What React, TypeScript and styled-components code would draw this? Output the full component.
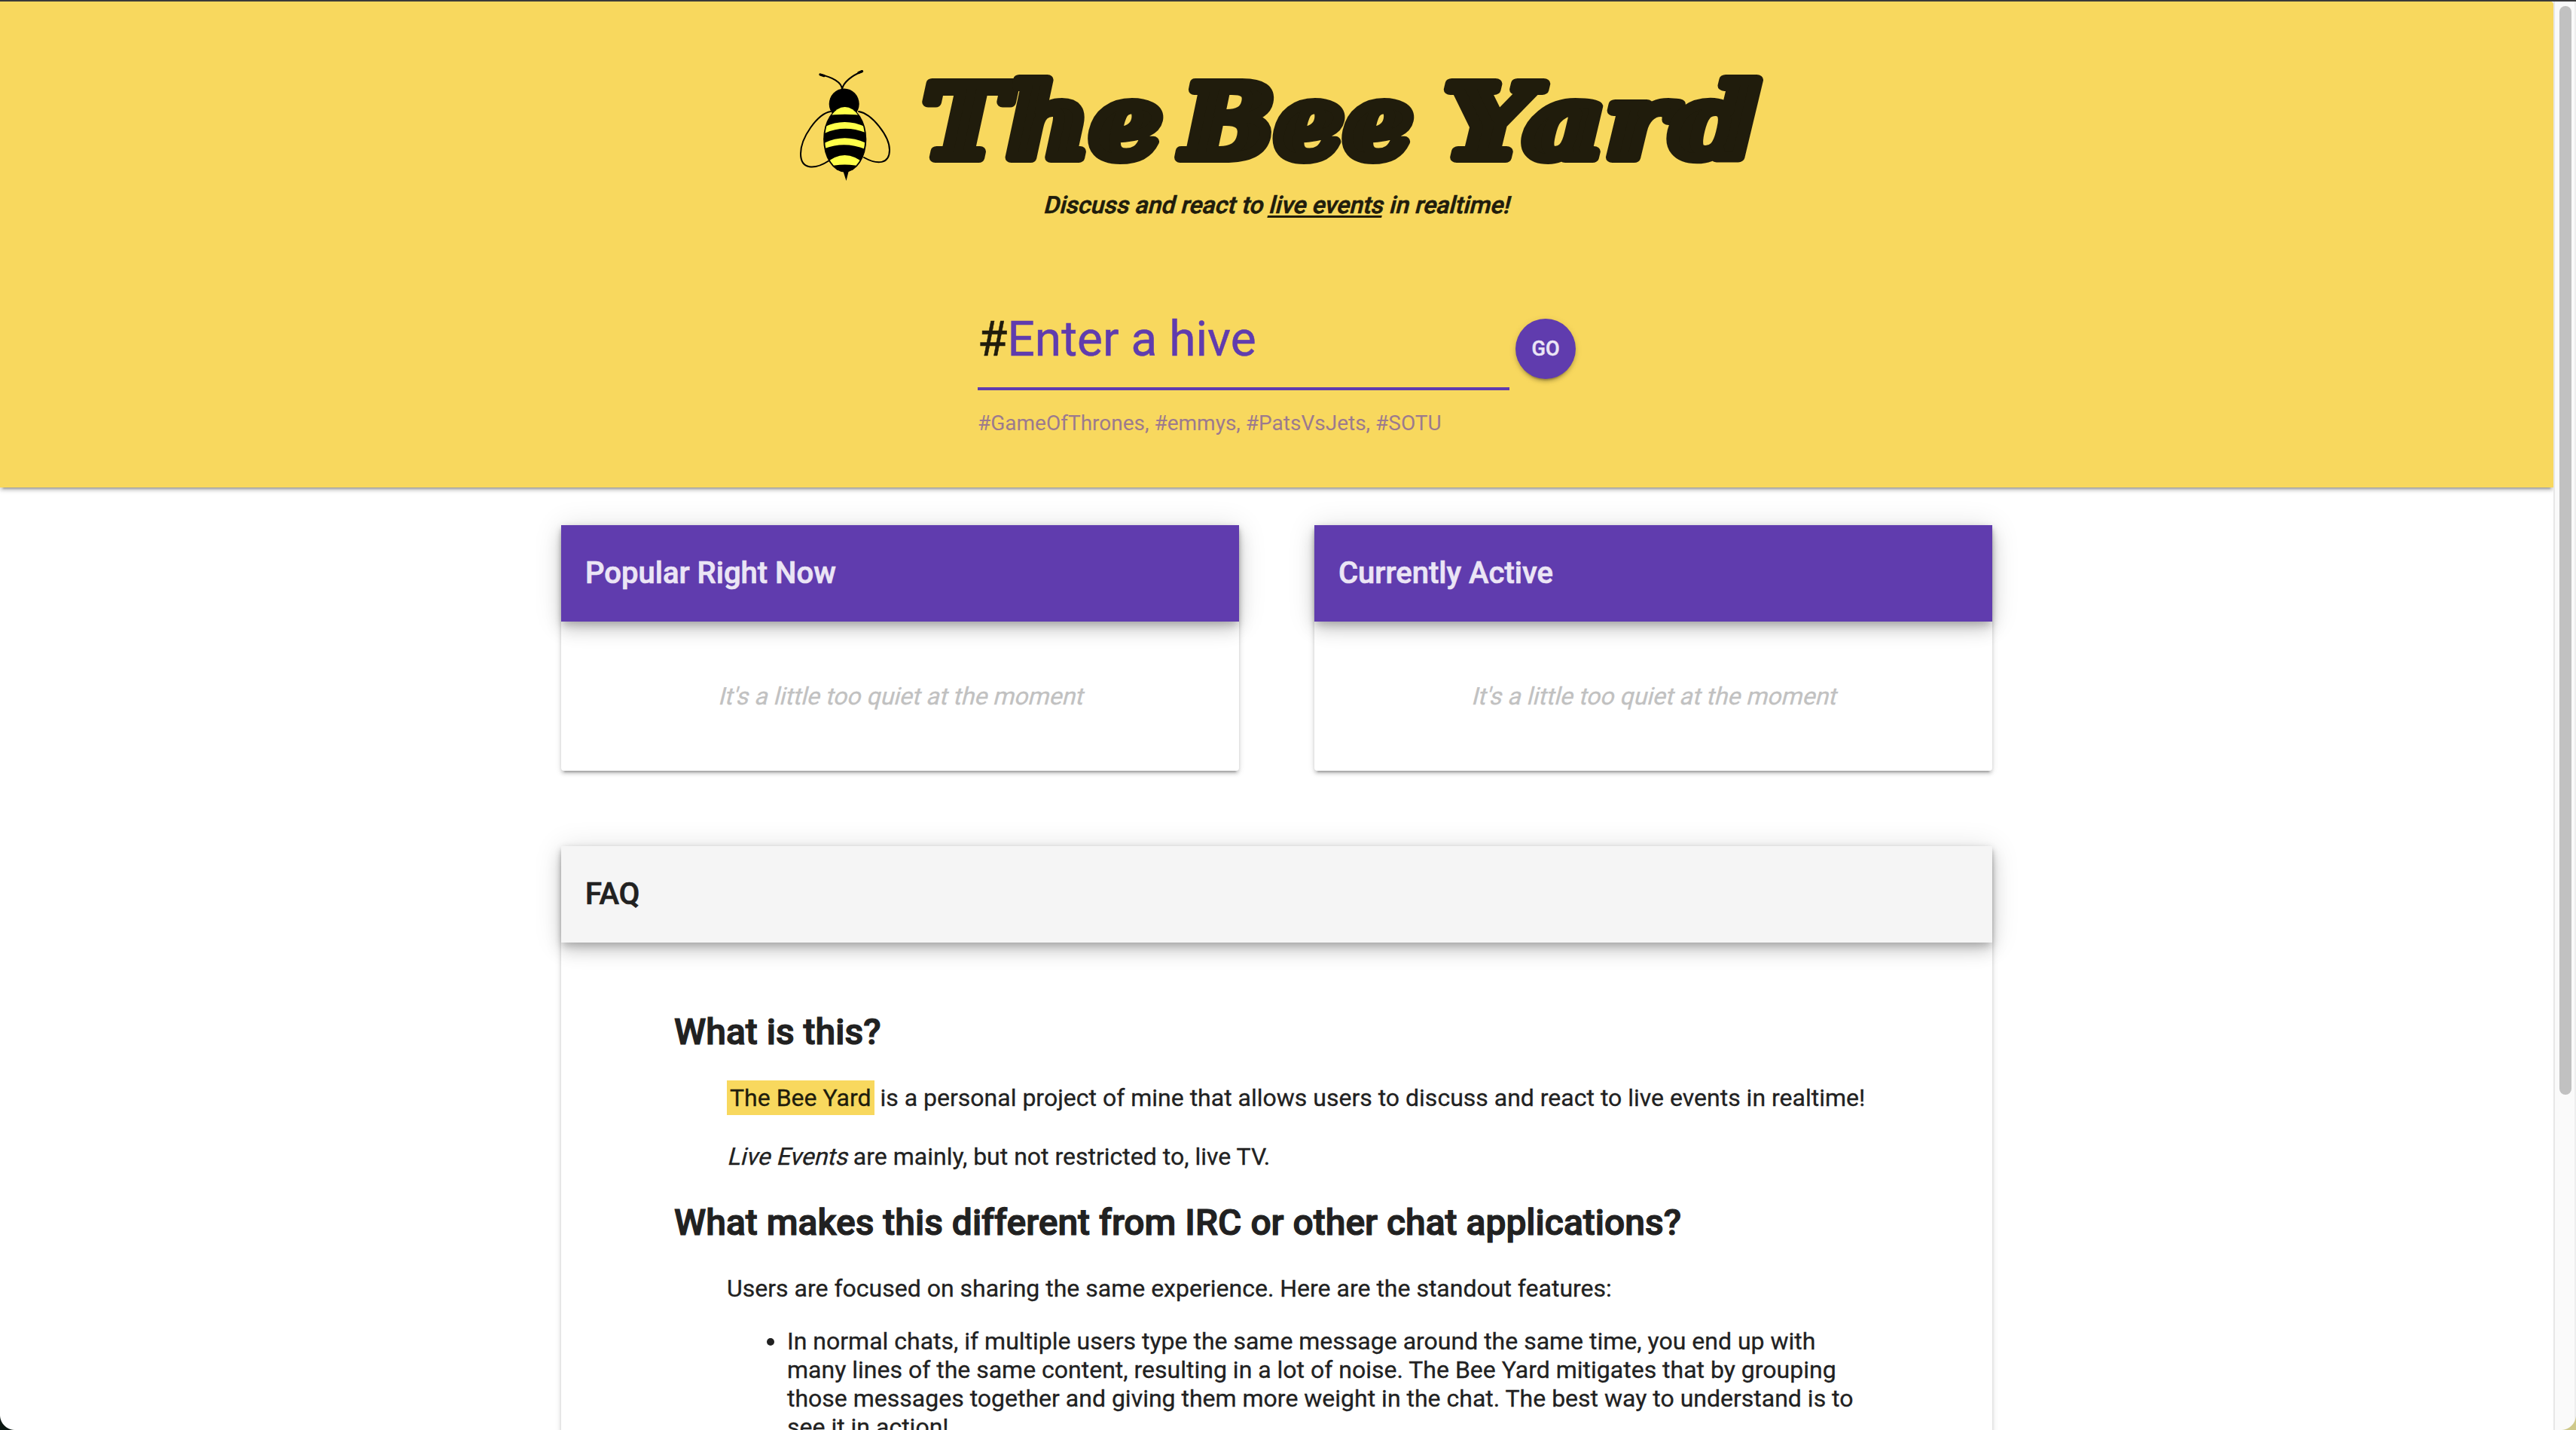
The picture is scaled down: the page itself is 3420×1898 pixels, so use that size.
import React from 'react';
import styled, { createGlobalStyle } from 'styled-components';

const purple = '#603cae';
const yellow = '#f8d85e';
const ink = '#201c0c';

const lowShadow = '0 6px 2px -4px rgba(0,0,0,.2), 0 4px 4px rgba(0,0,0,.14), 0 2px 10px rgba(0,0,0,.12)';
const highShadow = '0 6px 10px -2px rgba(0,0,0,.2), 0 12px 20px rgba(0,0,0,.14), 0 2px 36px rgba(0,0,0,.12)';

const GlobalStyle = createGlobalStyle`
  * { box-sizing: border-box; }
  body { margin: 0; background: #fff; font-family: Roboto, "Liberation Sans", sans-serif; color: #212121; overflow: hidden; }
`;

const Window = styled.div`
  position: relative;
  height: 1898px;
  overflow: hidden;
  border-top: 2px solid #3a3a3a;
  display: grid;
  grid-template-columns: 3390px 30px;
`;

const Page = styled.main`
  height: 1896px;
  overflow: hidden;
`;

const Track = styled.aside`
  background: #fafafa;
  border-left: 2px solid #e7e7e7;
  border-right: 2px solid #eee;
  padding: 6px 4px 0 6px;
`;

const Thumb = styled.div`
  height: 1445px;
  width: 16px;
  border-radius: 8px;
  background: #c1c1c1;
`;

const Corner = styled.div<{ $side: 'left' | 'right' }>`
  position: absolute;
  bottom: 0;
  ${(p) => p.$side}: 0;
  width: 20px;
  height: 20px;
  background: radial-gradient(
    circle at ${(p) => (p.$side === 'left' ? '100%' : '0%')} 0%,
    transparent 19.5px,
    ${(p) => (p.$side === 'left' ? '#0c1712' : '#cfc98a')} 20.5px
  );
`;

const Header = styled.header`
  height: 645px;
  background: ${yellow};
  border-top-right-radius: 4px;
  box-shadow: ${lowShadow};
  display: flex;
  flex-direction: column;
  align-items: center;
  color: ${ink};
`;

const Brand = styled.h1`
  margin: 0;
  width: 1290px;
  height: 245px;
  padding-top: 78px;
  display: flex;
  align-items: flex-start;
`;

const Bee = styled.svg`
  width: 150px;
  height: 170px;
  flex: none;
`;

const Wordmark = styled.svg`
  width: 1140px;
  height: 170px;
  flex: none;
  overflow: visible;
  text {
    font: italic bold 134px "DejaVu Serif", serif;
    fill: ${ink};
    stroke: ${ink};
    stroke-width: 14px;
    stroke-linejoin: round;
  }
`;

const Slanted = styled.span`
  display: inline-block;
  transform: skewX(-14deg);
  transform-origin: 50% 78%;
`;

const Tagline = styled.p`
  margin: 0;
  padding-right: 3px;
  font: 500 32px/50px Roboto, sans-serif;
  -webkit-text-stroke: 0.7px ${ink};
  u { text-decoration-thickness: 3px; text-underline-offset: 3px; }
`;

const HiveForm = styled.div`
  margin-top: 105px;
  width: 794px;
  display: grid;
  grid-template-columns: 706px 80px;
  column-gap: 8px;
`;

const Field = styled.div`
  height: 116px;
  border-bottom: 4px solid ${purple};
  font-size: 64px;
  line-height: 97px;
  color: ${purple};
  -webkit-text-stroke: 0.5px;
  span { color: ${ink}; }
`;

const GoButton = styled.button`
  margin-top: 21px;
  width: 80px;
  height: 80px;
  padding: 0;
  border: 0;
  border-radius: 50%;
  background: ${purple};
  color: #ebe5f5;
  font: 500 27px/80px Roboto, sans-serif;
  -webkit-text-stroke: 0.5px;
  box-shadow: ${lowShadow};
`;

const Helper = styled.div`
  margin-top: 26px;
  font-size: 28px;
  line-height: 36px;
  color: ${purple};
  opacity: .6;
`;

const Content = styled.div`
  width: 1900px;
  margin: 50px auto 0;
  display: grid;
  grid-template-columns: 900px 900px;
  gap: 100px;
`;

const Card = styled.section<{ $wide?: boolean }>`
  ${(p) => p.$wide && 'grid-column: 1 / -1;'}
  height: ${(p) => (p.$wide ? 1200 : 326)}px;
  border-radius: 4px;
  background: #fff;
  box-shadow: ${lowShadow};
`;

const CardTitle = styled.h2<{ $light?: boolean }>`
  margin: 0;
  height: 128px;
  padding-left: 32px;
  background: ${(p) => (p.$light ? '#f5f5f5' : purple)};
  color: ${(p) => (p.$light ? '#212121' : '#ebe5f5')};
  font: 500 40px/128px Roboto, sans-serif;
  -webkit-text-stroke: 0.7px;
  box-shadow: ${highShadow};
`;

const Empty = styled.p`
  margin: 0;
  padding: 80px 0 0 1px;
  text-align: center;
  font-size: 32px;
  line-height: 38px;
  color: #c1c1c1;
  -webkit-text-stroke: 0.3px;
`;

const Faq = styled.div`
  padding: 87px 150px 0;
`;

const Question = styled.h3`
  margin: 0;
  font: 500 48px/64px Roboto, sans-serif;
  -webkit-text-stroke: 1.2px;
`;

const Answer = styled.div`
  padding: 36px 0 0 70px;
  margin-bottom: -3px;
  font-size: 32px;
  line-height: 38px;
  -webkit-text-stroke: 0.3px;
  p { margin: 0 0 40px; }
`;

const Mark = styled.mark`
  padding: 4px;
  background: ${yellow};
  color: ${ink};
`;

const Features = styled.ul`
  margin: -8px 0 0;
  padding-left: 80px;
  width: 1500px;
`;

const BeeIcon = () => (
  <Bee viewBox="0 0 150 170">
    <clipPath id="abdomen">
      <ellipse cx="71.7" cy="104.5" rx="26.6" ry="42.5" />
    </clipPath>
    <g fill="none" stroke="#000" strokeWidth="2" strokeLinecap="round">
      <path d="M53 68C35 71 13 103 13 124C13 145 31 146 51 133" />
      <path d="M90 68C108 71 131 101 131 119C131 138 115 139 97 129" />
      <path d="M68 39C68 29 54 22 39 19M68 39C69 29 82 20 94 15" />
      <path d="M39 19l5 1.6M90 16.5l4.5-1.8" strokeWidth="3.4" />
    </g>
    <ellipse cx="70.7" cy="58" rx="20" ry="20.5" />
    <ellipse cx="71.7" cy="105" rx="28.6" ry="43.5" />
    <path d="M69 146h8l-3.5 14z" />
    <g fill="#ffff4a" clipPath="url(#abdomen)">
      <path d="M40 60H104V74Q71.5 69.5 40 74Z" />
      <path d="M40 91Q71 73 104 91V98Q71 83 40 99Z" />
      <path d="M40 112Q71 94.5 104 112V120Q71 105 40 119Z" />
      <path d="M40 143Q71 109 104 143V144Q71 133 40 144Z" />
    </g>
  </Bee>
);

export default function App() {
  return (
    <>
      <GlobalStyle />
      <Window>
        <Page>
          <Header>
            <Brand>
              <BeeIcon />
              <Wordmark viewBox="0 0 1140 170">
                <text x="25" y="129" textLength="318" lengthAdjust="spacingAndGlyphs">The</text>
                <text x="370" y="129" textLength="306" lengthAdjust="spacingAndGlyphs">Bee</text>
                <text x="717" y="129" textLength="419" lengthAdjust="spacingAndGlyphs">Yard</text>
              </Wordmark>
            </Brand>
            <Tagline><Slanted>Discuss and react to <u>live events</u> in realtime!</Slanted></Tagline>
            <HiveForm>
              <div>
                <Field><span>#</span>Enter a hive</Field>
                <Helper>#GameOfThrones, #emmys, #PatsVsJets, #SOTU</Helper>
              </div>
              <GoButton>GO</GoButton>
            </HiveForm>
          </Header>
          <Content>
            <Card>
              <CardTitle>Popular Right Now</CardTitle>
              <Empty><Slanted>It's a little too quiet at the moment</Slanted></Empty>
            </Card>
            <Card>
              <CardTitle>Currently Active</CardTitle>
              <Empty><Slanted>It's a little too quiet at the moment</Slanted></Empty>
            </Card>
            <Card $wide>
              <CardTitle $light>FAQ</CardTitle>
              <Faq>
                <Question>What is this?</Question>
                <Answer>
                  <p><Mark>The Bee Yard</Mark> is a personal project of mine that allows users to discuss and react to live events in realtime!</p>
                  <p><Slanted>Live Events</Slanted> are mainly, but not restricted to, live TV.</p>
                </Answer>
                <Question>What makes this different from IRC or other chat applications?</Question>
                <Answer>
                  <p>Users are focused on sharing the same experience. Here are the standout features:</p>
                  <Features>
                    <li>In normal chats, if multiple users type the same message around the same time, you end up with many lines of the same content, resulting in a lot of noise. The Bee Yard mitigates that by grouping those messages together and giving them more weight in the chat. The best way to understand is to see it in action!</li>
                  </Features>
                </Answer>
              </Faq>
            </Card>
          </Content>
        </Page>
        <Track><Thumb /></Track>
        <Corner $side="left" />
        <Corner $side="right" />
      </Window>
    </>
  );
}
